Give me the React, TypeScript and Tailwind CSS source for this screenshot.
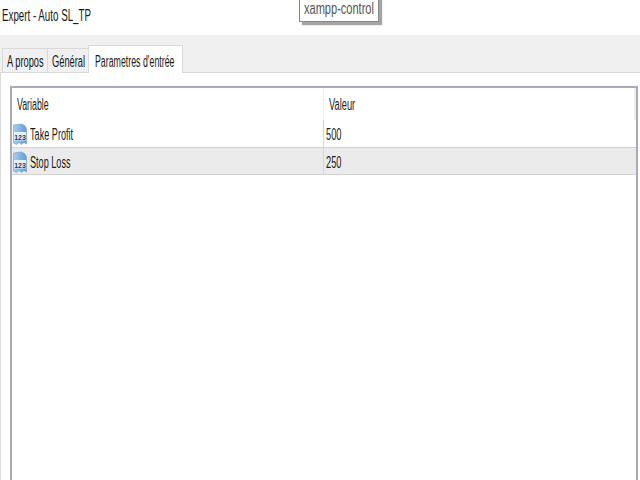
const font = { fontFamily: '"Liberation Sans", Arial, sans-serif' };

function Squeezed({ children, className = "scale-x-[0.57]" }: { children: React.ReactNode; className?: string }) {
  return <span className={`inline-block origin-left whitespace-nowrap ${className}`}>{children}</span>;
}

function NumIcon() {
  return (
    <svg width="14" height="23" viewBox="0 0 14 23" className="mt-[2px] shrink-0">
      <defs>
        <linearGradient id="numDoc" x1="0" y1="0" x2="1" y2="0">
          <stop offset="0" stopColor="#a9cdef" />
          <stop offset="1" stopColor="#5f9bd6" />
        </linearGradient>
      </defs>
      <path d="M0.5 2 L8.5 1 Q12.5 2 13.5 6 L13.5 21 L11 19.5 L8.5 21.5 L6 19.5 L3.5 21.5 L0.5 20 Z" fill="url(#numDoc)" stroke="#6b9fd0" strokeWidth="0.6" />
      <rect x="1" y="9" width="12" height="8.5" fill="#e4eff9" />
      <text x="7" y="16.5" textAnchor="middle" fontSize="7" fontWeight="700" fill="#173f6b" fontFamily="Liberation Sans">123</text>
    </svg>
  );
}

function Row({ name, value, selected }: { name: string; value: string; selected?: boolean }) {
  return (
    <div className={`flex items-center ${selected ? "h-[28px] border-y border-[#d2d2d2] bg-[#ebebeb]" : "h-[27px]"}`}>
      <div className="flex h-full w-[312px] items-center border-r border-[#d6d6d6] pl-[1px]">
        <NumIcon />
        <div className="ml-[3px] w-[200px] pt-[3px] text-[16px] text-[#1c1c1c]"><Squeezed>{name}</Squeezed></div>
      </div>
      <div className="pl-[2px] pt-[3px] text-[16px] text-[#1c1c1c]"><Squeezed className="scale-x-[0.58]">{value}</Squeezed></div>
    </div>
  );
}

export default function App() {
  return (
    <div className="relative flex h-[480px] w-[640px] flex-col overflow-hidden bg-white" style={font}>
      <div className="flex h-[35px] shrink-0 items-start pl-[2px] pt-[4px] text-[16px] text-[#1a1a1a]">
        <Squeezed className="scale-x-[0.61]">Expert - Auto SL_TP</Squeezed>
      </div>

      {/* tooltip floats over the window title */}
      <div className="absolute left-[299px] top-[-4px] flex h-[26px] w-[80px] items-center border border-[#8a8a8a] bg-white pl-[4px] text-[16px] text-[#555] shadow-[3px_3px_1px_#a4a4a4]">
        <Squeezed className="scale-x-[0.69]">xampp-control</Squeezed>
      </div>

      <div className="flex h-[38px] shrink-0 items-end border-b border-[#d9d9d9] bg-[#f0f0f0] pl-[2px]">
        <div className="mb-[-1px] flex h-[25px] w-[46px] items-center border border-[#d9d9d9] bg-[#f0f0f0] pl-[4px] pt-[2px] text-[16px] text-[#1a1a1a]">
          <Squeezed className="scale-x-[0.58]">A propos</Squeezed>
        </div>
        <div className="mb-[-1px] flex h-[25px] w-[41px] items-center border border-l-0 border-[#d9d9d9] bg-[#f0f0f0] pl-[4px] pt-[2px] text-[16px] text-[#1a1a1a]">
          <Squeezed className="scale-x-[0.58]">Général</Squeezed>
        </div>
        <div className="relative z-10 mb-[-1px] ml-[-1px] flex h-[28px] w-[95px] items-start border border-b-0 border-[#d9d9d9] bg-white pl-[6px] pt-[4px] text-[16px] text-[#1a1a1a]">
          <Squeezed className="scale-x-[0.55]">Parametres d'entrée</Squeezed>
        </div>
      </div>

      <div className="flex min-h-0 flex-1 border-l border-[#d9d9d9] pl-[9px] pr-[2px] pt-[13px]">
        <div className="flex flex-1 flex-col border-x-2 border-t-2 border-[#ababb8]">
          <div className="flex h-[32px] items-center">
            <div className="flex h-full w-[312px] items-center border-r border-[#efefef] pl-[5px] pt-[2px] text-[16px] text-[#1c1c1c]">
              <Squeezed className="scale-x-[0.55]">Variable</Squeezed>
            </div>
            <div className="flex h-full flex-1 items-center border-r-2 border-[#eeeeee] pl-[5px] pt-[2px] text-[16px] text-[#1c1c1c]">
              <Squeezed className="scale-x-[0.58]">Valeur</Squeezed>
            </div>
          </div>
          <Row name="Take Profit" value="500" />
          <Row name="Stop Loss" value="250" selected />
        </div>
      </div>
    </div>
  );
}
